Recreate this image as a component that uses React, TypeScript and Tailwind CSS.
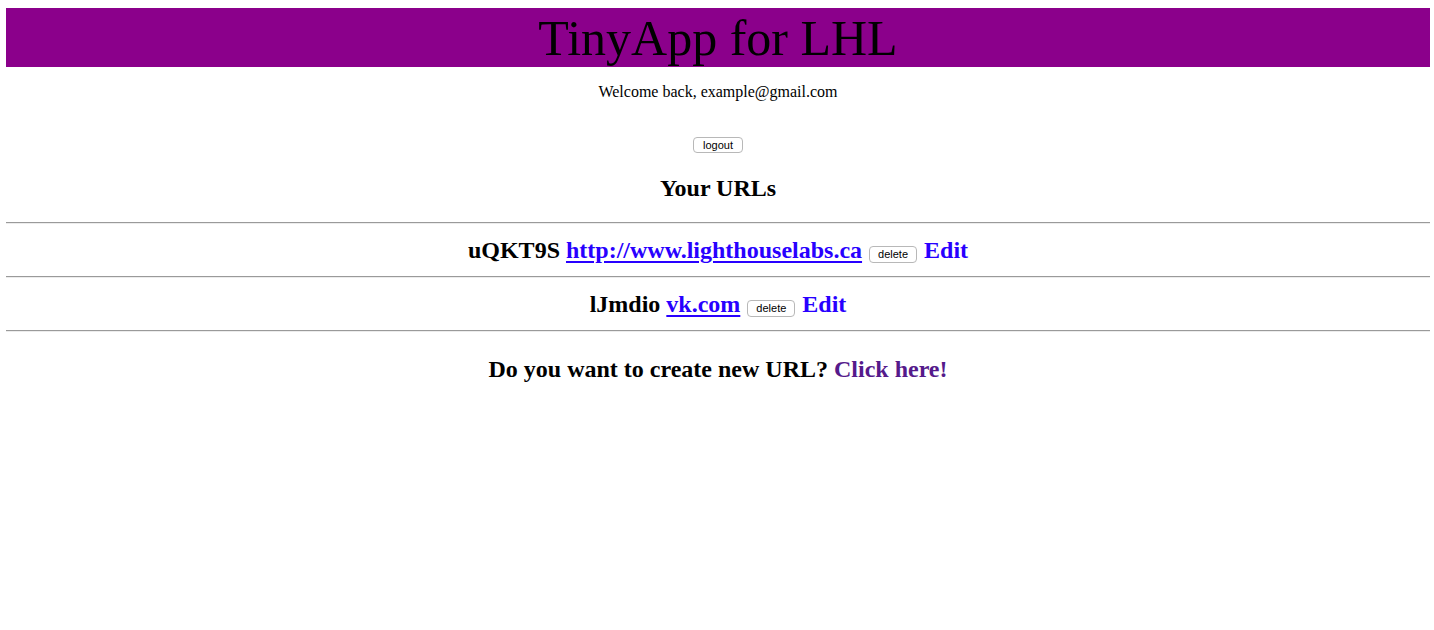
import React from "react";

function Hr() {
  return <div className="h-[2px] border-t border-t-[#9a9a9a] border-b border-b-[#ececec]" />;
}

function Row({ id, url }: { id: string; url: string }) {
  return (
    <div className="h-[52px] flex items-center justify-center">
      <p className="text-[24px] leading-[28px] font-bold text-center">
        {id}{" "}
        <a href="#" className="text-[#2800ff] underline decoration-[2px] underline-offset-[3px]">
          {url}
        </a>{" "}
        <span className="inline-block w-[48px] h-[17px] align-[0px] mx-[1px]">
          <button className="w-[48px] h-[17px] rounded-[4px] border border-[#b8b8b8] bg-white text-[11px] leading-none text-black font-['Liberation_Sans',Arial,sans-serif] font-normal">
            delete
          </button>
        </span>{" "}
        <a href="#" className="text-[#2800ff] no-underline">
          Edit
        </a>
      </p>
    </div>
  );
}

export default function App() {
  return (
    <div className="min-h-screen bg-white text-black pl-[6px] pr-[4px] pt-[8px] font-['Liberation_Serif','Times_New_Roman',serif]">
      <div className="h-[59px] bg-[#8b008b] flex items-center justify-center">
        <h1 className="text-[50px] leading-none font-normal">TinyApp for LHL</h1>
      </div>
      <p className="mt-[16px] text-[16px] leading-[18px] text-center">Welcome back, example@gmail.com</p>
      <div className="mt-[36px] flex justify-center">
        <button className="w-[50px] h-[16px] rounded-[4px] border border-[#b8b8b8] bg-white text-[11px] leading-none text-black font-['Liberation_Sans',Arial,sans-serif] flex items-center justify-center">
          logout
        </button>
      </div>
      <h3 className="mt-[22px] text-[24px] leading-[26px] font-bold text-center">Your URLs</h3>
      <div className="mt-[21px]">
        <Hr />
        <Row id="uQKT9S" url="http://www.lighthouselabs.ca" />
        <Hr />
        <Row id="lJmdio" url="vk.com" />
        <Hr />
      </div>
      <p className="mt-[23px] text-[24px] leading-[28px] font-bold text-center">
        Do you want to create new URL?{" "}
        <a href="#" className="text-[#551a8b] no-underline">
          Click here!
        </a>
      </p>
    </div>
  );
}
